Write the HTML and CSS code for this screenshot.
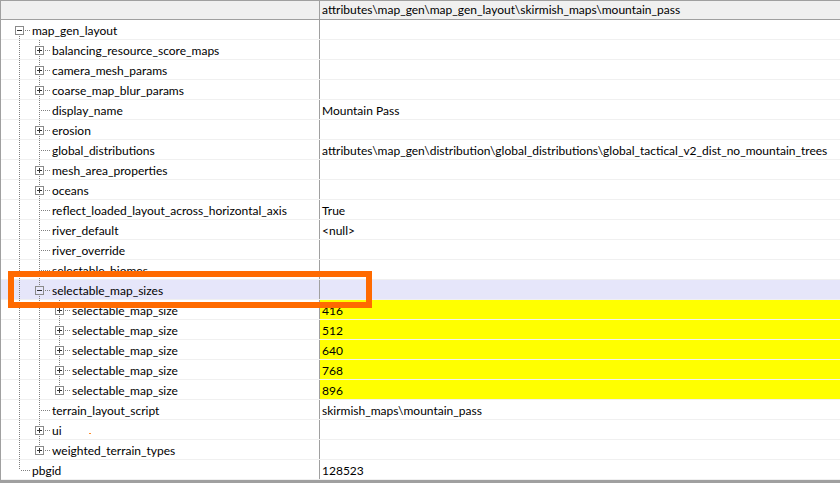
FILE: index.html
```html
<!DOCTYPE html>
<html lang="en">
<head>
  <meta charset="UTF-8">
  <title>Attribute editor</title>
  <link rel="stylesheet" href="styles.css">
</head>
<body>
  <div class="page">
    <div class="tree">
      <div class="head">
        <div class="name"></div>
        <div class="value">attributes\map_gen\map_gen_layout\skirmish_maps\mountain_pass</div>
      </div>

      <div class="row">
        <div class="name"><span class="own f"><i class="box minus"></i></span><span class="label">map_gen_layout</span></div>
        <div class="value"></div>
      </div>
      <div class="row">
        <div class="name"><span class="g v"></span><span class="own t"><i class="box plus"></i></span><span class="label">balancing_resource_score_maps</span></div>
        <div class="value"></div>
      </div>
      <div class="row">
        <div class="name"><span class="g v"></span><span class="own t"><i class="box plus"></i></span><span class="label">camera_mesh_params</span></div>
        <div class="value"></div>
      </div>
      <div class="row">
        <div class="name"><span class="g v"></span><span class="own t"><i class="box plus"></i></span><span class="label">coarse_map_blur_params</span></div>
        <div class="value"></div>
      </div>
      <div class="row">
        <div class="name"><span class="g v"></span><span class="own t"></span><span class="label">display_name</span></div>
        <div class="value">Mountain Pass</div>
      </div>
      <div class="row">
        <div class="name"><span class="g v"></span><span class="own t"><i class="box plus"></i></span><span class="label">erosion</span></div>
        <div class="value"></div>
      </div>
      <div class="row">
        <div class="name"><span class="g v"></span><span class="own t"></span><span class="label">global_distributions</span></div>
        <div class="value">attributes\map_gen\distribution\global_distributions\global_tactical_v2_dist_no_mountain_trees</div>
      </div>
      <div class="row">
        <div class="name"><span class="g v"></span><span class="own t"><i class="box plus"></i></span><span class="label">mesh_area_properties</span></div>
        <div class="value"></div>
      </div>
      <div class="row">
        <div class="name"><span class="g v"></span><span class="own t"><i class="box plus"></i></span><span class="label">oceans</span></div>
        <div class="value"></div>
      </div>
      <div class="row">
        <div class="name"><span class="g v"></span><span class="own t"></span><span class="label">reflect_loaded_layout_across_horizontal_axis</span></div>
        <div class="value">True</div>
      </div>
      <div class="row">
        <div class="name"><span class="g v"></span><span class="own t"></span><span class="label">river_default</span></div>
        <div class="value">&lt;null&gt;</div>
      </div>
      <div class="row">
        <div class="name"><span class="g v"></span><span class="own t"></span><span class="label">river_override</span></div>
        <div class="value"></div>
      </div>
      <div class="row">
        <div class="name"><span class="g v"></span><span class="own t"></span><span class="label">selectable_biomes</span></div>
        <div class="value"></div>
      </div>
      <div class="row selected">
        <div class="name"><span class="g v"></span><span class="own t"><i class="box minus"></i></span><span class="label">selectable_map_sizes</span></div>
        <div class="value"></div>
      </div>
      <div class="row changed">
        <div class="name"><span class="g v"></span><span class="g v"></span><span class="own t"><i class="box plus"></i></span><span class="label">selectable_map_size</span></div>
        <div class="value">416</div>
      </div>
      <div class="row changed">
        <div class="name"><span class="g v"></span><span class="g v"></span><span class="own t"><i class="box plus"></i></span><span class="label">selectable_map_size</span></div>
        <div class="value">512</div>
      </div>
      <div class="row changed">
        <div class="name"><span class="g v"></span><span class="g v"></span><span class="own t"><i class="box plus"></i></span><span class="label">selectable_map_size</span></div>
        <div class="value">640</div>
      </div>
      <div class="row changed">
        <div class="name"><span class="g v"></span><span class="g v"></span><span class="own t"><i class="box plus"></i></span><span class="label">selectable_map_size</span></div>
        <div class="value">768</div>
      </div>
      <div class="row changed">
        <div class="name"><span class="g v"></span><span class="g v"></span><span class="own l"><i class="box plus"></i></span><span class="label">selectable_map_size</span></div>
        <div class="value">896</div>
      </div>
      <div class="row">
        <div class="name"><span class="g v"></span><span class="own t"></span><span class="label">terrain_layout_script</span></div>
        <div class="value">skirmish_maps\mountain_pass</div>
      </div>
      <div class="row">
        <div class="name"><span class="g v"></span><span class="own t"><i class="box plus"></i></span><span class="label">ui<span class="speck"></span></span></div>
        <div class="value"></div>
      </div>
      <div class="row">
        <div class="name"><span class="g v"></span><span class="own l"><i class="box plus"></i></span><span class="label">weighted_terrain_types</span></div>
        <div class="value"></div>
      </div>
      <div class="row">
        <div class="name"><span class="own l"></span><span class="label">pbgid</span></div>
        <div class="value">128523</div>
      </div>
    </div>
    <div class="scrollbar"></div>

    <!-- annotation drawn over the grid -->
    <div class="highlight"></div>
  </div>
</body>
</html>
```

FILE: styles.css
```css
body {
  margin: 0;
  background: #fff;
  font-family: Lato, "Noto Sans", sans-serif;
  font-size: 12px;
  color: #000;
}

.page {
  position: relative;
  width: 840px;
  height: 483px;
  overflow: hidden;
}

.tree {
  border-left: 1px solid #a0a0a0;
}

/* Header */
.head {
  display: flex;
  height: 20px;
  box-sizing: border-box;
  border-top: 1px solid #a0a0a0;
  border-bottom: 1px solid #a0a0a0;
  background-color: #f0f0f0;
}

.head .value {
  padding-top: 0;
  line-height: 18px;
}

/* Rows */
.row {
  display: flex;
  height: 20px;
  box-sizing: border-box;
  border-bottom: 1px solid #f0f0f0;
}

.name {
  display: flex;
  flex: none;
  width: 319px;
  box-sizing: border-box;
  padding-left: 8px;
  border-right: 1px solid #a0a0a0;
}

.value {
  flex: 1;
  padding: 2px 0 0 2px;
  line-height: 17px;
  white-space: nowrap;
}

.label {
  padding-top: 2px;
  line-height: 17px;
  white-space: nowrap;
}

.selected {
  background-color: #e6e6fa;
}

.changed .value {
  background-color: #ffff00;
}

/* Tree guide lines */
.g,
.own {
  display: flex;
  flex: none;
  width: 20px;
  height: 100%;
}

.own {
  width: 23px;
}

.g.v {
  background: repeating-linear-gradient(to bottom, #808080 0 1px, transparent 1px 2px) 10px 0 / 1px 100% no-repeat;
}

.own.t {
  background:
    repeating-linear-gradient(to bottom, #808080 0 1px, transparent 1px 2px) 10px 0 / 1px 100% no-repeat,
    repeating-linear-gradient(to right, #808080 0 1px, transparent 1px 2px) 12px 10px / 10px 1px no-repeat;
}

.own.l {
  background:
    repeating-linear-gradient(to bottom, #808080 0 1px, transparent 1px 2px) 10px 0 / 1px 10px no-repeat,
    repeating-linear-gradient(to right, #808080 0 1px, transparent 1px 2px) 12px 10px / 10px 1px no-repeat;
}

.own.f {
  background:
    repeating-linear-gradient(to bottom, #808080 0 1px, transparent 1px 2px) 10px 10px / 1px 100% no-repeat,
    repeating-linear-gradient(to right, #808080 0 1px, transparent 1px 2px) 12px 10px / 10px 1px no-repeat;
}

/* Expander boxes */
.box {
  display: block;
  width: 9px;
  height: 9px;
  margin: 6px 0 0 6px;
  box-sizing: border-box;
  border: 1px solid #8a8a8a;
  background-color: #fff;
}

.selected .box {
  background-color: #e6e6fa;
}

.box.minus {
  background-image: linear-gradient(#333, #333);
  background-size: 5px 1px;
  background-position: 1px 3px;
  background-repeat: no-repeat;
}

.box.plus {
  background-image: linear-gradient(#333, #333), linear-gradient(#333, #333);
  background-size: 5px 1px, 1px 5px;
  background-position: 1px 3px, 3px 1px;
  background-repeat: no-repeat;
}

.speck {
  display: inline-block;
  width: 2px;
  height: 1px;
  margin-left: 27px;
  vertical-align: 1px;
  background-color: #ff8c2a;
}

.scrollbar {
  height: 3px;
  background-color: #a0a0a0;
}

.highlight {
  position: absolute;
  left: 8px;
  top: 271px;
  width: 364px;
  height: 37px;
  box-sizing: border-box;
  border: 6px solid #ff6a00;
}
```
